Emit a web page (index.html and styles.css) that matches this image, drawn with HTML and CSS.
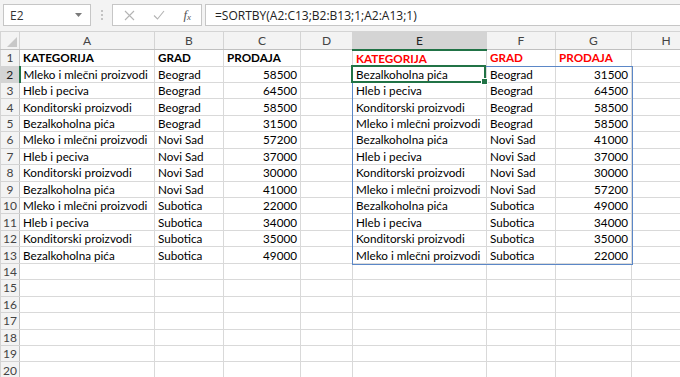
FILE: index.html
```html
<!DOCTYPE html>
<html>
<head>
<meta charset="utf-8">
<link rel="stylesheet" href="styles.css">
</head>
<body>
<div class="app">
  <div class="fbar">
    <div class="namebox"><span class="ref">E2</span><svg class="caret" width="7" height="4" viewBox="0 0 7 4"><path d="M0 0h7L3.5 4z" fill="#7a7a7a"/></svg></div>
    <div class="grip"><i></i><i></i><i></i></div>
    <div class="btns">
      <svg width="11" height="11" viewBox="0 0 11 11"><path d="M1 1l9 9M10 1l-9 9" stroke="#b4b4b4" stroke-width="1.1" fill="none"/></svg>
      <svg width="12" height="10" viewBox="0 0 12 10"><path d="M1 5.5l3.5 3.5L11 1" stroke="#b4b4b4" stroke-width="1.1" fill="none"/></svg>
      <span class="fx">f<sub>x</sub></span>
    </div>
    <div class="formula">=SORTBY(A2:C13;B2:B13;1;A2:A13;1)</div>
  </div>
  <div class="grid">
    <table class="sheet">
      <colgroup>
        <col class="c-rh"><col class="c-a"><col class="c-b"><col class="c-c"><col class="c-d"><col class="c-e"><col class="c-f"><col class="c-g"><col class="c-h">
      </colgroup>
      <thead>
        <tr class="hdr">
          <th class="corner"><svg width="10" height="10" viewBox="0 0 10 10"><path d="M10 0V10H0z" fill="#c8c8c8"/></svg></th>
          <th>A</th><th>B</th><th>C</th><th>D</th><th class="sel">E</th><th>F</th><th>G</th><th>H</th>
        </tr>
      </thead>
      <tbody>
        <tr><th>1</th><td class="b">KATEGORIJA</td><td class="b">GRAD</td><td class="b">PRODAJA</td><td></td><td class="b red">KATEGORIJA</td><td class="b red">GRAD</td><td class="b red">PRODAJA</td><td></td></tr>
        <tr><th class="sel">2</th><td>Mleko i mlečni proizvodi</td><td>Beograd</td><td class="n">58500</td><td></td><td>Bezalkoholna pića</td><td>Beograd</td><td class="n">31500</td><td></td></tr>
        <tr><th>3</th><td>Hleb i peciva</td><td>Beograd</td><td class="n">64500</td><td></td><td>Hleb i peciva</td><td>Beograd</td><td class="n">64500</td><td></td></tr>
        <tr><th>4</th><td>Konditorski proizvodi</td><td>Beograd</td><td class="n">58500</td><td></td><td>Konditorski proizvodi</td><td>Beograd</td><td class="n">58500</td><td></td></tr>
        <tr><th>5</th><td>Bezalkoholna pića</td><td>Beograd</td><td class="n">31500</td><td></td><td>Mleko i mlečni proizvodi</td><td>Beograd</td><td class="n">58500</td><td></td></tr>
        <tr><th>6</th><td>Mleko i mlečni proizvodi</td><td>Novi Sad</td><td class="n">57200</td><td></td><td>Bezalkoholna pića</td><td>Novi Sad</td><td class="n">41000</td><td></td></tr>
        <tr><th>7</th><td>Hleb i peciva</td><td>Novi Sad</td><td class="n">37000</td><td></td><td>Hleb i peciva</td><td>Novi Sad</td><td class="n">37000</td><td></td></tr>
        <tr><th>8</th><td>Konditorski proizvodi</td><td>Novi Sad</td><td class="n">30000</td><td></td><td>Konditorski proizvodi</td><td>Novi Sad</td><td class="n">30000</td><td></td></tr>
        <tr><th>9</th><td>Bezalkoholna pića</td><td>Novi Sad</td><td class="n">41000</td><td></td><td>Mleko i mlečni proizvodi</td><td>Novi Sad</td><td class="n">57200</td><td></td></tr>
        <tr><th>10</th><td>Mleko i mlečni proizvodi</td><td>Subotica</td><td class="n">22000</td><td></td><td>Bezalkoholna pića</td><td>Subotica</td><td class="n">49000</td><td></td></tr>
        <tr><th>11</th><td>Hleb i peciva</td><td>Subotica</td><td class="n">34000</td><td></td><td>Hleb i peciva</td><td>Subotica</td><td class="n">34000</td><td></td></tr>
        <tr><th>12</th><td>Konditorski proizvodi</td><td>Subotica</td><td class="n">35000</td><td></td><td>Konditorski proizvodi</td><td>Subotica</td><td class="n">35000</td><td></td></tr>
        <tr><th>13</th><td>Bezalkoholna pića</td><td>Subotica</td><td class="n">49000</td><td></td><td>Mleko i mlečni proizvodi</td><td>Subotica</td><td class="n">22000</td><td></td></tr>
        <tr><th>14</th><td></td><td></td><td></td><td></td><td></td><td></td><td></td><td></td></tr>
        <tr><th>15</th><td></td><td></td><td></td><td></td><td></td><td></td><td></td><td></td></tr>
        <tr><th>16</th><td></td><td></td><td></td><td></td><td></td><td></td><td></td><td></td></tr>
        <tr><th>17</th><td></td><td></td><td></td><td></td><td></td><td></td><td></td><td></td></tr>
        <tr><th>18</th><td></td><td></td><td></td><td></td><td></td><td></td><td></td><td></td></tr>
        <tr><th>19</th><td></td><td></td><td></td><td></td><td></td><td></td><td></td><td></td></tr>
        <tr><th>20</th><td></td><td></td><td></td><td></td><td></td><td></td><td></td><td></td></tr>
      </tbody>
    </table>
    <div class="spill"></div>
    <div class="active"><span class="handle"></span></div>
  </div>
</div>
</body>
</html>
```

FILE: styles.css
```css
html, body {
  margin: 0;
  padding: 0;
  background: #ffffff;
}
body {
  width: 680px;
  height: 377px;
  overflow: hidden;
}
.app {
  width: 680px;
}
.fbar {
  display: flex;
  align-items: stretch;
  height: 22px;
  padding: 4px 0 5px 3px;
  background: #f3f3f3;
  font-family: "Open Sans", "Noto Sans", sans-serif;
  font-size: 12px;
  color: #333;
}
.namebox {
  border: 1px solid #c6c6c6;
  background: #fff;
  display: flex;
  align-items: center;
  justify-content: space-between;
  padding: 0 8px 0 6px;
  box-sizing: border-box;
  height: 22px;
  width: 88px;
}
.ref {
  color: #333;
}
.caret {
  display: block;
}
.grip {
  width: 21px;
  display: flex;
  flex-direction: column;
  align-items: center;
  justify-content: center;
  gap: 2px;
}
.grip i {
  display: block;
  width: 2px;
  height: 2px;
  background: #c3c3c3;
}
.btns {
  width: 90px;
  box-sizing: border-box;
  border: 1px solid #c6c6c6;
  background: #fff;
  display: flex;
  align-items: center;
  padding: 0 10px 0 11px;
  justify-content: space-between;
}
.fx {
  font-family: "Liberation Serif", serif;
  font-style: italic;
  font-size: 13px;
  color: #555;
  line-height: 1;
}
.fx sub {
  font-size: 9px;
  vertical-align: -1px;
}
.formula {
  flex: 1;
  margin-left: 3px;
  border: 1px solid #c6c6c6;
  border-right: none;
  background: #fff;
  display: flex;
  align-items: center;
  padding-left: 9px;
  box-sizing: border-box;
  color: #222;
}
.grid {
  position: relative;
}
.sheet {
  border-collapse: collapse;
  table-layout: fixed;
  width: 700px;
  font-family: "Lato", "Liberation Sans", sans-serif;
  font-size: 11.7px;
  color: #000;
}
.c-rh { width: 19px; }
.c-a { width: 135px; }
.c-b { width: 69px; }
.c-c { width: 77px; }
.c-d { width: 52px; }
.c-e { width: 134px; }
.c-f { width: 69px; }
.c-g { width: 76px; }
.c-h { width: 69px; }
.sheet tr {
  height: 16.45px;
}
.sheet tr.hdr {
  height: 18px;
}
.sheet th {
  background: #f3f3f3;
  color: #444;
  font-weight: normal;
  font-size: 12px;
  padding: 0;
  border: 1px solid #d4d4d4;
  text-align: center;
  white-space: nowrap;
  overflow: hidden;
}
.sheet thead th {
  border-bottom: 1px solid #c0c0c0;
}
.sheet tbody th {
  border-right: 1px solid #c0c0c0;
}
.sheet th.sel {
  background: #d4d4d4;
  color: #222;
}
.sheet thead th.sel {
  border-bottom: 2px solid #217346;
}
.sheet tbody th.sel {
  border-right: 2px solid #217346;
}
.corner {
  vertical-align: bottom;
}
.corner svg {
  display: block;
  margin: 0 2px 2px auto;
}
.sheet td {
  border: 1px solid #d9d9d9;
  padding: 0 3px;
  white-space: nowrap;
  overflow: hidden;
  line-height: 15px;
}
.sheet td.b {
  font-weight: bold;
}
.sheet td.red {
  color: #ff0000;
}
.sheet td.n {
  text-align: right;
}
.spill {
  position: absolute;
  left: 352px;
  top: 34.5px;
  width: 279px;
  height: 197px;
  border: 1px solid #5b87c7;
  pointer-events: none;
}
.active {
  position: absolute;
  left: 351px;
  top: 33.5px;
  width: 135px;
  height: 18px;
  border: 2px solid #217346;
  box-sizing: border-box;
  pointer-events: none;
}
.handle {
  position: absolute;
  right: -4px;
  bottom: -4px;
  width: 5px;
  height: 5px;
  background: #217346;
  border: 1px solid #fff;
}
```
